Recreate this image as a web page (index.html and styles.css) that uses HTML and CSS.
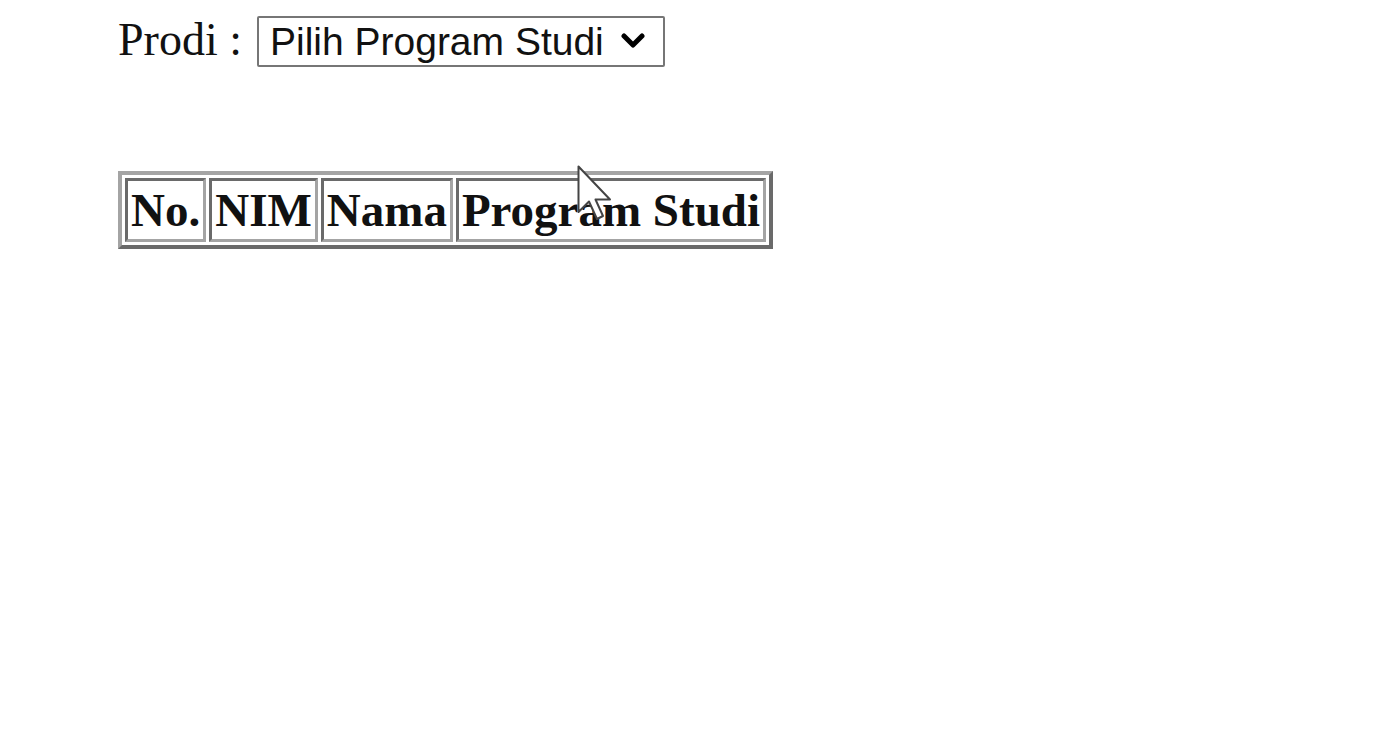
FILE: index.html
```html
<!DOCTYPE html>
<html lang="id">
<head>
<meta charset="utf-8">
<title>Data Mahasiswa</title>
<link rel="stylesheet" href="styles.css">
</head>
<body>
<main class="page">
  <form class="filter">
    <label class="filter-label" for="prodi">Prodi :</label>
    <span class="select-wrap">
      <select id="prodi" class="select">
        <option>Pilih Program Studi</option>
      </select>
      <svg class="chevron" width="24" height="16" viewBox="0 0 24 16" aria-hidden="true">
        <path d="M3 3 L12 12 L21 3" fill="none" stroke="#000" stroke-width="5" stroke-linecap="round" stroke-linejoin="round"/>
      </svg>
    </span>
  </form>

  <div class="table-area">
    <table class="data-table">
      <thead>
        <tr>
          <th>No.</th>
          <th>NIM</th>
          <th>Nama</th>
          <th>Program Studi</th>
        </tr>
      </thead>
    </table>
    <svg class="cursor" width="34" height="56" viewBox="0 0 34 56" aria-hidden="true">
      <path d="M1.5 1.5 L1.5 47 L12 36.5 L20 54 L26 51 L18.5 34.5 L33 34.5 Z" fill="#fff" stroke="#444" stroke-width="2" stroke-linejoin="round"/>
    </svg>
  </div>
</main>
</body>
</html>
```

FILE: styles.css
```css
html, body {
  margin: 0;
  padding: 0;
  background: #ffffff;
}

.page {
  padding: 14px 0 0 118px;
  font-family: "Liberation Serif", "Times New Roman", serif;
  color: #111;
}

.filter {
  display: flex;
  align-items: baseline;
  margin: 0;
}

.filter-label {
  font-size: 46px;
  line-height: 51px;
  margin-right: 15px;
  color: #111;
}

.select-wrap {
  position: relative;
  display: inline-block;
}

.select {
  appearance: none;
  -webkit-appearance: none;
  box-sizing: border-box;
  width: 408px;
  height: 51px;
  margin: 0;
  padding: 0 60px 0 11px;
  border: 2px solid #767676;
  border-radius: 2px;
  background: #fff;
  font-family: "Liberation Sans", Arial, sans-serif;
  font-size: 39px;
  line-height: 47px;
  color: #111;
}

.chevron {
  position: absolute;
  right: 20px;
  top: 17px;
  pointer-events: none;
}

.table-area {
  position: relative;
  margin-top: 104px;
  display: inline-block;
}

.data-table {
  border-collapse: separate;
  border-spacing: 3px;
  border-width: 4px;
  border-style: solid;
  border-color: #a4a4a4 #6a6a6a #6a6a6a #a4a4a4;
  font-family: "Liberation Serif", "Times New Roman", serif;
}

.data-table th {
  font-size: 47px;
  font-weight: bold;
  line-height: 54px;
  padding: 2px 3px;
  border-width: 3px;
  border-style: solid;
  border-color: #6a6a6a #a4a4a4 #a4a4a4 #6a6a6a;
  color: #111;
  white-space: nowrap;
}

.cursor {
  position: absolute;
  left: 459px;
  top: -6px;
  pointer-events: none;
}
```
